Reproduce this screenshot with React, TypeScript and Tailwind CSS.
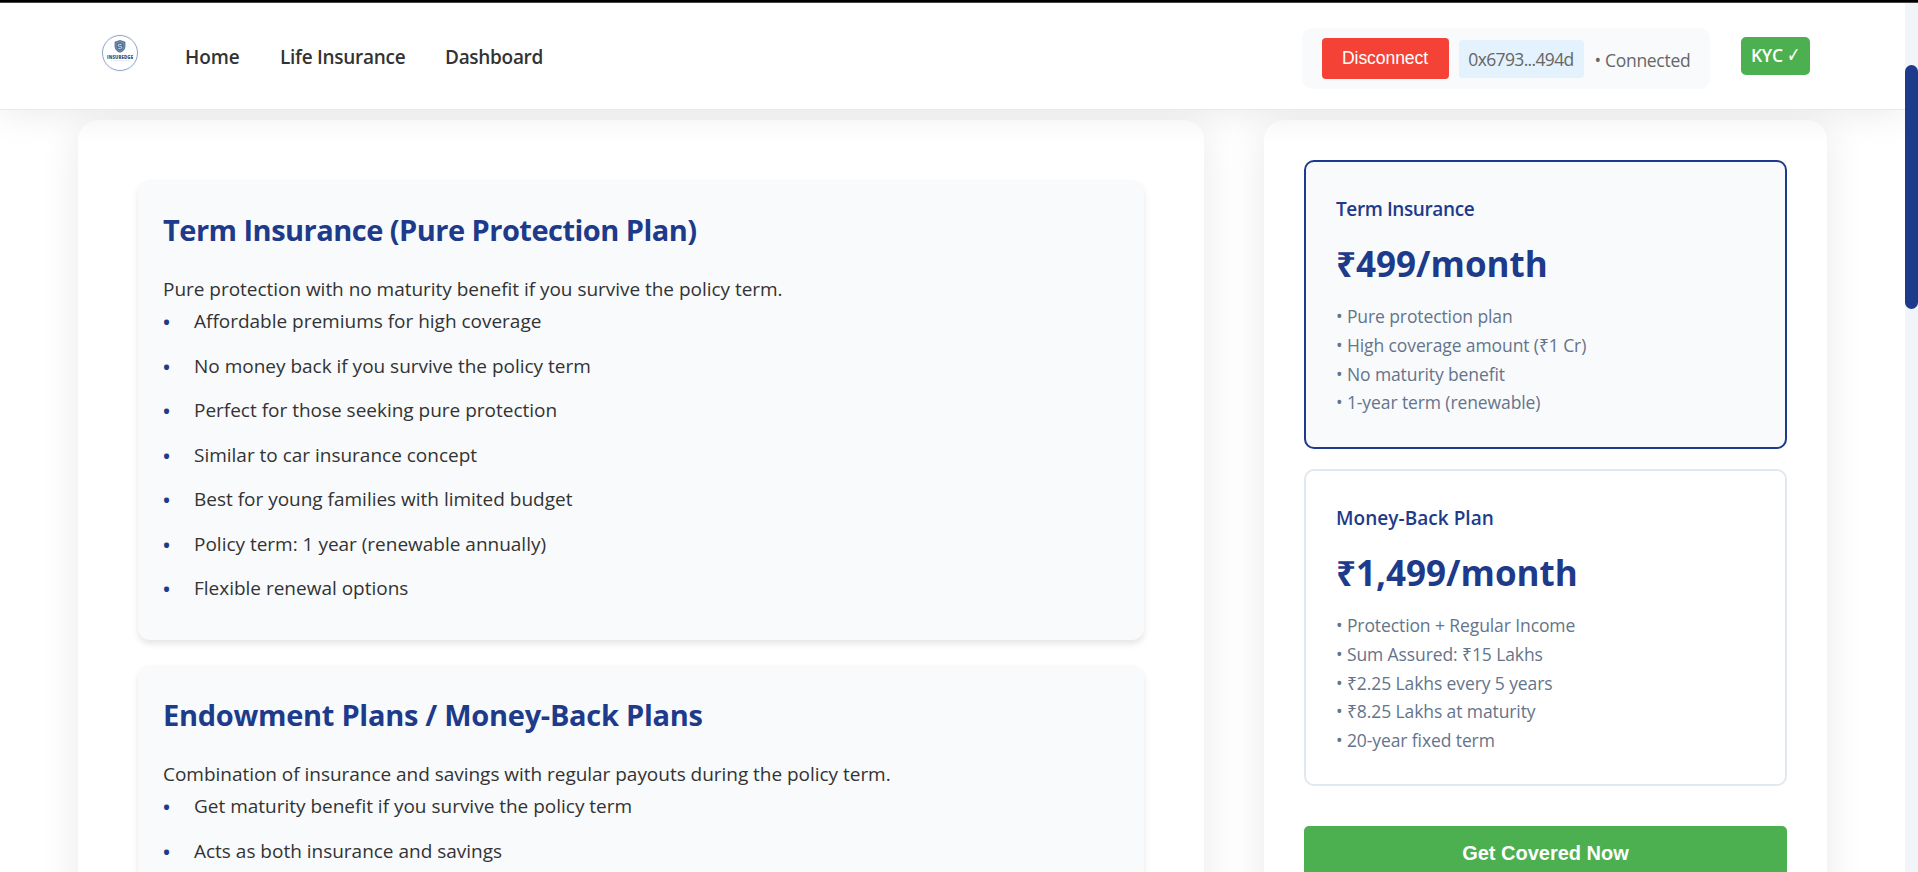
import React from "react";

const NAV = [
  { label: "Home", cls: "w-[54px] tracking-[-0.1px]" },
  { label: "Life Insurance", cls: "w-[124px] tracking-[-0.28px]" },
  { label: "Dashboard", cls: "w-[98px] tracking-[-0.3px]" },
];

const SECTIONS = [
  {
    title: "Term Insurance (Pure Protection Plan)",
    titleCls: "tracking-[-0.52px]",
    text: "Pure protection with no maturity benefit if you survive the policy term.",
    points: [
      "Affordable premiums for high coverage",
      "No money back if you survive the policy term",
      "Perfect for those seeking pure protection",
      "Similar to car insurance concept",
      "Best for young families with limited budget",
      "Policy term: 1 year (renewable annually)",
      "Flexible renewal options",
    ],
  },
  {
    title: "Endowment Plans / Money-Back Plans",
    titleCls: "tracking-[-0.28px]",
    text: "Combination of insurance and savings with regular payouts during the policy term.",
    points: [
      "Get maturity benefit if you survive the policy term",
      "Acts as both insurance and savings",
    ],
  },
];

const PLANS = [
  {
    name: "Term Insurance",
    nameCls: "tracking-[-0.4px]",
    price: "₹499/month",
    box: "h-[289px] border-[#1e3a8a] bg-[#f8fafc]",
    points: ["Pure protection plan", "High coverage amount (₹1 Cr)", "No maturity benefit", "1-year term (renewable)"],
  },
  {
    name: "Money-Back Plan",
    nameCls: "tracking-[0.04px]",
    price: "₹1,499/month",
    box: "h-[317px] border-[#e2e8f0] bg-white",
    points: [
      "Protection + Regular Income",
      "Sum Assured: ₹15 Lakhs",
      "₹2.25 Lakhs every 5 years",
      "₹8.25 Lakhs at maturity",
      "20-year fixed term",
    ],
  },
];

function Logo() {
  return (
    <svg width="38" height="38" viewBox="0 0 38 38" className="block">
      <circle cx="19" cy="19" r="18.6" fill="#fff" stroke="#eef1f5" strokeWidth="0.6" />
      <circle cx="19" cy="19" r="17.5" fill="#fff" stroke="#6f8fb3" strokeWidth="0.8" />
      <path d="M19 6l5.4 1.8v4.6c0 3-2.2 5-5.4 6.4-3.2-1.4-5.4-3.4-5.4-6.4V7.8z" fill="#4f7296" />
      <path d="M19 7.6l4 1.3v3.6c0 2.3-1.6 3.8-4 4.9-2.4-1.1-4-2.6-4-4.9V8.9z" fill="none" stroke="#a9bdd2" strokeWidth="0.5" />
      <path d="M20.6 10.4h-2.3a1 1 0 0 0 0 2h1.4a1 1 0 0 1 0 2h-2.3" fill="none" stroke="#dbe5ef" strokeWidth="0.9" />
      <text x="19" y="24.7" textAnchor="middle" fontSize="4.3" fontWeight="800" fill="#2f5480" textLength="26" className="font-['Open_Sans']">
        INSUREDGE
      </text>
      <path d="M10 26.7h18" stroke="#c9d3de" strokeWidth="0.7" strokeDasharray="1.5 0.6" />
    </svg>
  );
}

function Header() {
  return (
    <header className="relative z-10 flex h-[107px] shrink-0 items-start border-b border-[#e8eaf3] bg-white pl-[101px] shadow-[0_0_40px_rgba(0,0,0,0.1)]">
      <div className="mt-[31px]">
        <Logo />
      </div>
      <nav className="mt-[38px] ml-[46px] flex gap-[41px] text-[19px] leading-[32px] font-semibold text-[#333]">
        {NAV.map((n) => (
          <a key={n.label} className={`whitespace-nowrap ${n.cls}`}>
            {n.label}
          </a>
        ))}
      </nav>
      <div className="mt-[25px] mr-[31px] ml-auto flex h-[61px] w-[408px] items-start rounded-[10px] bg-[#f8fafc] pl-[19.5px] text-[17.5px] text-[#666]">
        <button className="mt-[10px] h-[41px] w-[127px] rounded-[4px] bg-[#f44336] pb-[1px] font-['Liberation_Sans'] text-[17.6px] tracking-[-0.1px] text-white">
          Disconnect
        </button>
        <span className="mt-[12px] ml-[10px] h-[38px] w-[125px] rounded-[4px] bg-[#e3f2fd] text-center leading-[38px] tracking-[-0.65px]">
          0x6793...494d
        </span>
        <span className="mt-[13px] ml-[11px] leading-[38px] tracking-[-0.3px] whitespace-nowrap">• Connected</span>
      </div>
      <div className="mt-[34px] mr-[95px] flex h-[38px] w-[69px] items-center justify-center gap-[4px] rounded-[5px] bg-[#4caf50] text-[17.5px] leading-none font-semibold tracking-[-0.2px] text-white">
        KYC
        <span className="scale-y-[1.3] font-['DejaVu_Sans'] text-[16px] font-normal">✓</span>
      </div>
    </header>
  );
}

function Section({ s }: { s: (typeof SECTIONS)[number] }) {
  return (
    <section className="rounded-[12px] bg-[#f8fafc] px-[25px] pt-[30px] pb-[23.5px] shadow-[0_4px_6px_rgba(0,0,0,0.1)]">
      <h2 className={`text-[29px] leading-[40px] font-bold text-[#1e3a8a] ${s.titleCls}`}>{s.title}</h2>
      <p className="mt-[23px] text-[19px] leading-[32px] tracking-[-0.03px] text-[#333]">{s.text}</p>
      <ul>
        {s.points.map((p) => (
          <li key={p} className="flex h-[44.5px] text-[19px] leading-[32px] tracking-[-0.01px] text-[#333]">
            <span className="-ml-px w-[32px] pt-px text-[24px] text-[#1e3a8a]">•</span>
            {p}
          </li>
        ))}
      </ul>
    </section>
  );
}

function Plan({ p }: { p: (typeof PLANS)[number] }) {
  return (
    <div className={`rounded-[10px] border-2 px-[30px] pt-[31px] ${p.box}`}>
      <h3 className={`text-[19px] leading-[32px] font-semibold text-[#1e3a8a] ${p.nameCls}`}>{p.name}</h3>
      <div className="mt-[15px] text-[35px] leading-[48px] font-bold text-[#1e3a8a]">{p.price}</div>
      <ul className="mt-[14px] text-[17.5px] leading-[28.8px] tracking-[-0.1px] text-[#64748b]">
        {p.points.map((x) => (
          <li key={x}>• {x}</li>
        ))}
      </ul>
    </div>
  );
}

export default function App() {
  return (
    <div className="flex h-[872px] flex-col overflow-hidden bg-white font-['Open_Sans','Noto_Sans',sans-serif]">
      <div className="h-[3px] shrink-0 border-b border-[#444] bg-black" />
      <div className="flex min-h-0 flex-1">
        <div className="flex min-w-0 flex-1 flex-col overflow-hidden">
          <Header />
          <main className="flex h-[900px] shrink-0 gap-[60px] pt-[10px] pl-[78px]">
            <div className="flex w-[1126px] flex-col gap-[25px] rounded-[20px] bg-white px-[60px] pt-[60px] shadow-[0_6px_40px_rgba(0,0,0,0.09)]">
              {SECTIONS.map((s) => (
                <Section key={s.title} s={s} />
              ))}
            </div>
            <aside className="flex w-[563px] flex-col gap-[20px] rounded-[20px] bg-white px-[40px] pt-[40px] shadow-[0_6px_40px_rgba(0,0,0,0.09)]">
              {PLANS.map((p) => (
                <Plan key={p.name} p={p} />
              ))}
              <button className="mt-[20px] h-[54px] rounded-[5px] bg-[#4caf50] pb-[1px] font-['Liberation_Sans'] text-[20px] font-bold text-white">
                Get Covered Now
              </button>
            </aside>
          </main>
        </div>
        <div className="w-[13px] shrink-0 bg-[#f1f5f9] pt-[62px]">
          <div className="h-[244px] rounded-full bg-[#1e3a8a]" />
        </div>
      </div>
    </div>
  );
}
